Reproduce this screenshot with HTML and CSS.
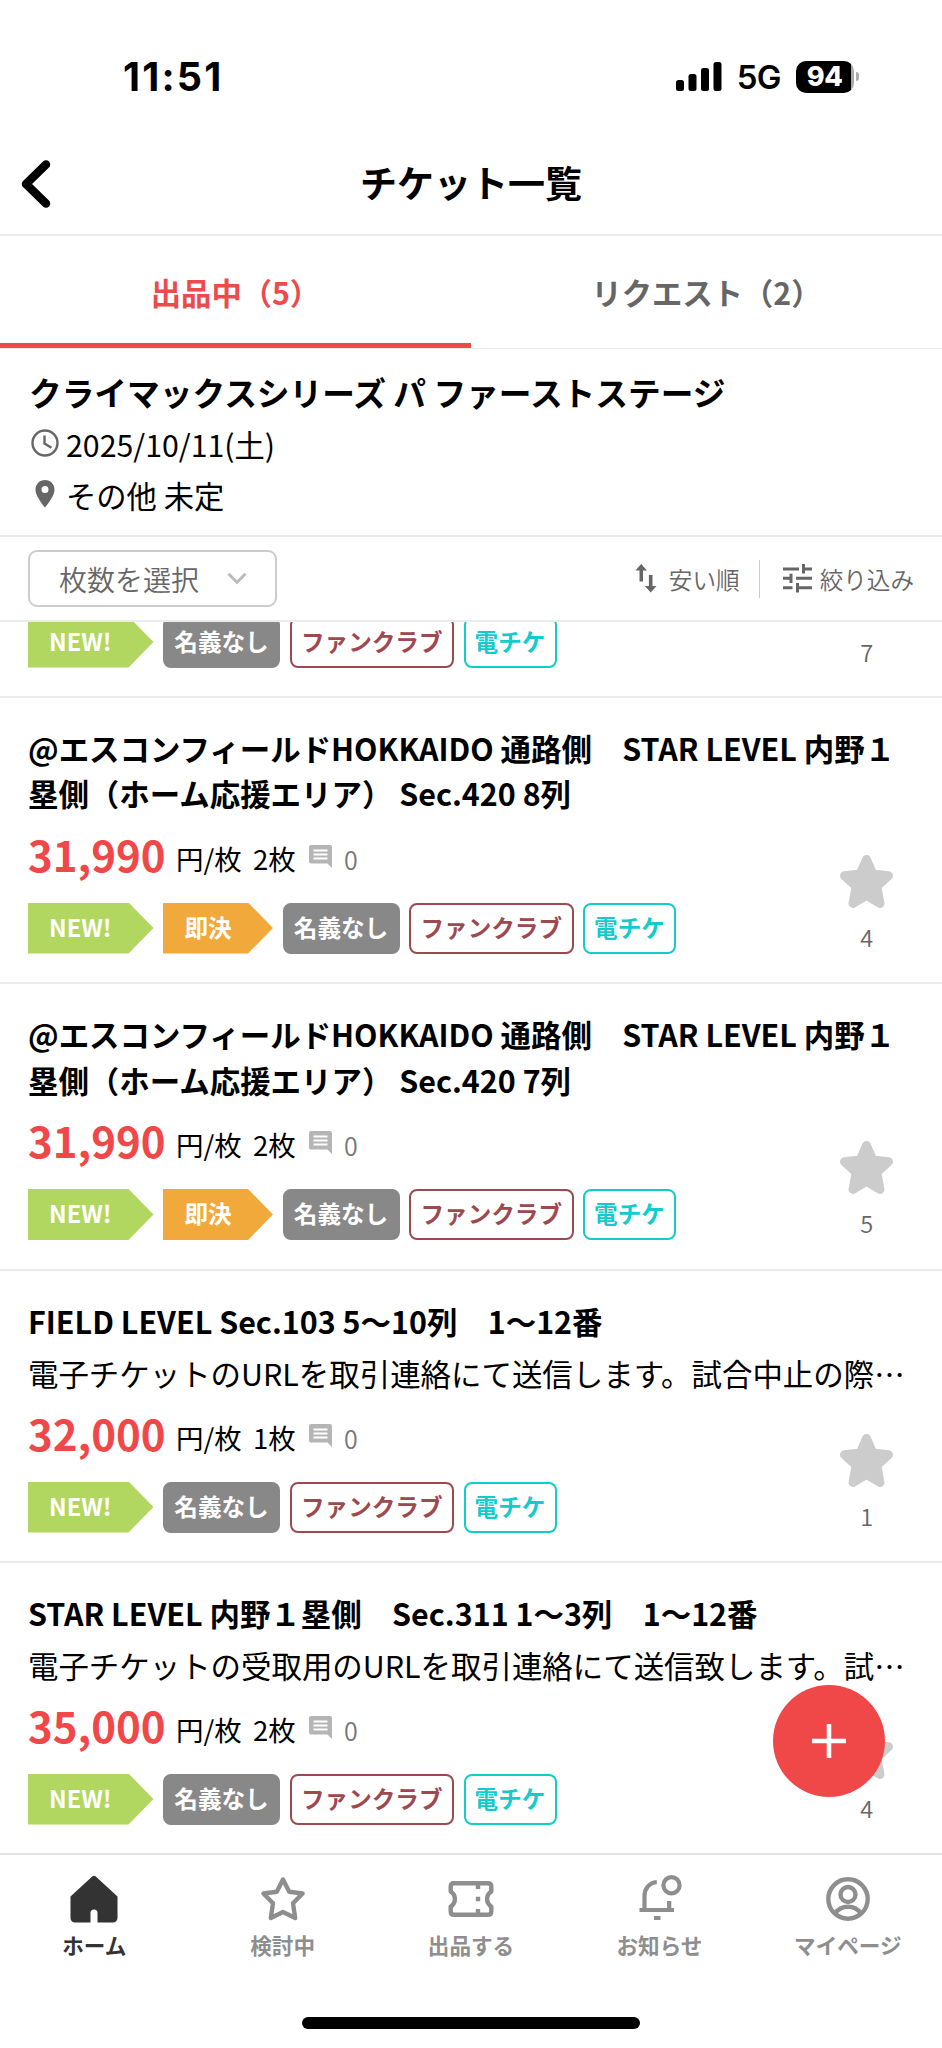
FILE: index.html
```html
<!DOCTYPE html>
<html lang="ja">
<head>
<meta charset="utf-8">
<title>チケット一覧</title>
<link rel="stylesheet" href="styles.css">
</head>
<body>
<svg class="defs" width="0" height="0">
  <symbol id="star" viewBox="0 0 53 53"><path d="M26.5 4.5 L32.8 19 L48.5 20.7 L36.8 31.3 L40 48.5 L26.5 40.5 L13 48.5 L16.2 31.3 L4.500 20.7 L20.200 19 Z" fill="#ccc" stroke="#ccc" stroke-width="9" stroke-linejoin="round"/></symbol>
  <symbol id="comment" viewBox="0 0 23 23"><path d="M2 0H21a2 2 0 0 1 2 2V23L18.500 18.500H2a2 2 0 0 1-2-2V2a2 2 0 0 1 2-2Z" fill="#b5b5b5"/><path d="M4.500 5.600H18.500M4.500 9.500H18.500M4.500 13.400H18.500" stroke="#fff" stroke-width="2"/></symbol>
</svg>
<div class="app">
  <div class="status">
    <span class="time">11:51</span>
    <span class="status-right">
      <svg width="46" height="29" viewBox="0 0 46 29"><rect x="0" y="18" width="8" height="11" rx="2.500"/><rect x="12.500" y="12" width="8" height="17" rx="2.500"/><rect x="25" y="6" width="8" height="23" rx="2.500"/><rect x="37.500" y="0" width="8" height="29" rx="2.500"/></svg>
      <span class="net">5G</span>
      <span class="battery"><span class="level">94</span><i class="tip"></i></span>
    </span>
  </div>
  <header class="header">
    <svg class="back" width="32" height="50" viewBox="0 0 32 50"><path d="M26 5.500L6 25L26 44.500" fill="none" stroke="#000" stroke-width="8.500" stroke-linecap="round" stroke-linejoin="round"/></svg>
    <h1>チケット一覧</h1>
  </header>
  <nav class="tabs">
    <div class="tab active">出品中（5）</div>
    <div class="tab">リクエスト（2）</div>
  </nav>
  <section class="event">
    <h2>クライマックスシリーズ パ ファーストステージ</h2>
    <div class="info"><svg width="28" height="28" viewBox="0 0 28 28"><g fill="none" stroke="#666" stroke-width="2.400"><circle cx="14" cy="14" r="12.500"/><path d="M13.500 6.500V14.500L20.500 18.700"/></g></svg><span>2025/10/11(土)</span></div>
    <div class="info place"><svg width="28" height="28" viewBox="0 0 28 28"><path fill-rule="evenodd" fill="#666" d="M14 0C8.500 0 4.500 4.200 4.500 9.700C4.500 16.500 14 27.500 14 27.500S23.500 16.500 23.500 9.700C23.500 4.200 19.500 0 14 0ZM14 13a3.500 3.500 0 1 1 0-7a3.500 3.500 0 0 1 0 7Z"/></svg><span>その他 未定</span></div>
  </section>
  <section class="filters">
    <div class="select"><span>枚数を選択</span><svg width="20" height="13" viewBox="0 0 20 13"><path d="M1.500 1.800L10 10.300L18.500 1.800" fill="none" stroke="#bbb" stroke-width="3"/></svg></div>
    <div class="actions">
      <div class="action sort"><svg width="22" height="29" viewBox="0 0 22 29"><path fill="#666" d="M6.200 0L12 6.500H8V17.500H4.500V6.500H.4ZM15.700 28.500L9.900 22H13.900V11H17.500V22H21.500Z"/></svg><span>安い順</span></div>
      <div class="action filter"><svg width="29" height="29" viewBox="0 0 29 29"><path fill="none" stroke="#666" stroke-width="3" d="M0 5H16M20.500 0V9.500M20.500 5H29M0 14.300H9M8 9.700V19M13 14.300H29M0 23.700H9.500M14.500 19V28.500M14.500 23.700H29"/></svg><span>絞り込み</span></div>
    </div>
  </section>
  <main class="list">
    <article class="card first">
      <div class="lower">
        <div class="detail">
          <div class="tags"><span class="flag new">NEW!</span><span class="tag gray">名義なし</span><span class="tag red">ファンクラブ</span><span class="tag cyan">電チケ</span></div>
        </div>
        <div class="fav"><span>7</span></div>
      </div>
    </article>
    <article class="card">
      <h3>@エスコンフィールドHOKKAIDO 通路側　STAR LEVEL 内野１<br>塁側（ホーム応援エリア） Sec.420 8列</h3>
      <div class="lower">
        <div class="detail">
          <div class="price"><b>31,990</b><span class="unit">円/枚</span><span class="qty">2枚</span><svg width="23" height="23"><use href="#comment"/></svg><span class="num">0</span></div>
          <div class="tags"><span class="flag new">NEW!</span><span class="flag now">即決</span><span class="tag gray">名義なし</span><span class="tag red">ファンクラブ</span><span class="tag cyan">電チケ</span></div>
        </div>
        <div class="fav"><svg width="53" height="53"><use href="#star"/></svg><span>4</span></div>
      </div>
    </article>
    <article class="card">
      <h3>@エスコンフィールドHOKKAIDO 通路側　STAR LEVEL 内野１<br>塁側（ホーム応援エリア） Sec.420 7列</h3>
      <div class="lower">
        <div class="detail">
          <div class="price"><b>31,990</b><span class="unit">円/枚</span><span class="qty">2枚</span><svg width="23" height="23"><use href="#comment"/></svg><span class="num">0</span></div>
          <div class="tags"><span class="flag new">NEW!</span><span class="flag now">即決</span><span class="tag gray">名義なし</span><span class="tag red">ファンクラブ</span><span class="tag cyan">電チケ</span></div>
        </div>
        <div class="fav"><svg width="53" height="53"><use href="#star"/></svg><span>5</span></div>
      </div>
    </article>
    <article class="card">
      <h3>FIELD LEVEL Sec.103 5〜10列　1〜12番</h3>
      <p>電子チケットのURLを取引連絡にて送信します。試合中止の際…</p>
      <div class="lower">
        <div class="detail">
          <div class="price"><b>32,000</b><span class="unit">円/枚</span><span class="qty">1枚</span><svg width="23" height="23"><use href="#comment"/></svg><span class="num">0</span></div>
          <div class="tags"><span class="flag new">NEW!</span><span class="tag gray">名義なし</span><span class="tag red">ファンクラブ</span><span class="tag cyan">電チケ</span></div>
        </div>
        <div class="fav"><svg width="53" height="53"><use href="#star"/></svg><span>1</span></div>
      </div>
    </article>
    <article class="card last">
      <h3>STAR LEVEL 内野１塁側　Sec.311 1〜3列　1〜12番</h3>
      <p>電子チケットの受取用のURLを取引連絡にて送信致します。試…</p>
      <div class="lower">
        <div class="detail">
          <div class="price"><b>35,000</b><span class="unit">円/枚</span><span class="qty">2枚</span><svg width="23" height="23"><use href="#comment"/></svg><span class="num">0</span></div>
          <div class="tags"><span class="flag new">NEW!</span><span class="tag gray">名義なし</span><span class="tag red">ファンクラブ</span><span class="tag cyan">電チケ</span></div>
        </div>
        <div class="fav"><svg width="53" height="53"><use href="#star"/></svg><span>4</span></div>
      </div>
    </article>
  </main>
  <div class="fab"><svg width="34" height="34" viewBox="0 0 34 34"><path d="M17 0V34M0 17H34" stroke="#fff" stroke-width="4.500"/></svg></div>
  <nav class="bottom">
    <div class="item on"><svg width="48" height="48" viewBox="0 0 48 48"><path fill="#333" d="M22.500 1.300Q24 0 25.500 1.300L47.500 21.500V43a4.500 4.500 0 0 1-4.500 4.500H27.500V38a3.500 3.500 0 0 0-7 0V47.500H5A4.500 4.500 0 0 1 .5 43V21.500Z"/></svg><span>ホーム</span></div>
    <div class="item"><svg width="48" height="48" viewBox="0 0 48 48"><path fill="none" stroke="#8e8e8e" stroke-width="4.400" stroke-linejoin="round" d="M24 4.500L30.200 16.700L43.600 18.500L34 28.200L36.200 43L24 37L11.800 43L14 28.200L4.400 18.500L17.800 16.700Z"/></svg><span>検討中</span></div>
    <div class="item"><svg width="48" height="48" viewBox="0 0 48 48"><g fill="none" stroke="#8e8e8e" stroke-width="4.400"><path stroke-linejoin="round" d="M7 8.200H41Q44.300 8.200 44.300 11.500V16.500A8.800 8.800 0 0 0 44.300 31.500V36.500Q44.300 39.800 41 39.800H7Q3.700 39.800 3.700 36.500V31.500A8.800 8.800 0 0 0 3.700 16.500V11.500Q3.700 8.200 7 8.200Z"/><path d="M31 10V14M31 21.800V26.200M31 34V38"/></g></svg><span>出品する</span></div>
    <div class="item"><svg width="48" height="48" viewBox="0 0 48 48"><g fill="none" stroke="#8e8e8e" stroke-width="4.200"><circle cx="36.500" cy="10.300" r="8.100"/><path d="M21.800 7.200C14 7.800 9.500 14 9.500 21V35M4.500 35H39M34.200 26V35M19 43H25.500"/></g></svg><span>お知らせ</span></div>
    <div class="item"><svg width="48" height="48" viewBox="0 0 48 48"><g fill="none" stroke="#8e8e8e" stroke-width="4.400"><circle cx="24" cy="24" r="19.700"/><circle cx="24" cy="19.500" r="7.500"/><path d="M11 38.500C14 34 18.500 31.700 24 31.700S34 34 37 38.500"/></g></svg><span>マイページ</span></div>
  </nav>
  <div class="home-area"><i></i></div>
</div>
</body>
</html>
```
FILE: styles.css
```css
* { box-sizing: border-box; }
body { margin: 0; background: #fff; color: #000; font-family: "Noto Sans CJK JP", sans-serif; }
h1, h2, h3, p { margin: 0; }
svg { display: block; flex: none; overflow: visible; }
.defs { position: absolute; }
.app { position: relative; display: flex; flex-direction: column; width: 942px; height: 2048px; overflow: hidden; white-space: nowrap; }

.status { display: flex; justify-content: space-between; align-items: center; height: 133px; padding: 20px 83px 0 123px; font-family: Inter, sans-serif; }
.time { font-size: 39.500px; font-weight: 700; letter-spacing: 2.200px; }
.status-right { display: flex; align-items: center; }
.net { margin-left: 15px; font-size: 33px; font-weight: 600; letter-spacing: -.6px; }
.battery { display: flex; align-items: center; margin-left: 15px; }
.level { width: 58px; height: 32px; border-radius: 10px; background: linear-gradient(90deg, #000 55px, #aaa 55px); color: #fff; font-size: 27px; font-weight: 800; line-height: 32px; text-align: center; letter-spacing: -.5px; padding-right: 1px; }
.tip { width: 3px; height: 9px; margin-left: 2px; border-radius: 0 4px 4px 0; background: #aaa; }

.header { display: flex; align-items: center; height: 103px; padding: 0 20px; border-bottom: 2px solid #ebebeb; }
.header h1 { flex: 1; margin-right: 32px; text-align: center; font-size: 37px; font-weight: 700; line-height: 50px; padding-bottom: 3px; }

.tabs { display: flex; height: 113px; border-bottom: 1px solid #ebebeb; }
.tab { flex: 1; height: 112px; padding-top: 31px; text-align: center; font-size: 30.300px; font-weight: 700; line-height: 50px; color: #666; }
.active { color: #eb4b4b; border-bottom: 5px solid #eb4b4b; }

.event { height: 188px; padding: 18px 29px 0; border-bottom: 2px solid #ebebeb; }
.event h2 { font-size: 32.700px; font-weight: 700; line-height: 50px; }
.info { display: flex; align-items: center; gap: 8px; height: 50px; margin-top: 2px; padding-left: 2px; font-size: 30.300px; line-height: 50px; }
.info svg { margin-top: -3px; }
.info span { margin-left: -1px; }
.place { margin-top: 1px; }

.filters { display: flex; align-items: center; justify-content: space-between; height: 85px; padding: 0 28px; border-bottom: 2px solid #ebebeb; color: #666; }
.select { display: flex; align-items: center; width: 249px; height: 57px; padding: 0 28px 0 29px; justify-content: space-between; border: 2px solid #ccc; border-radius: 9px; font-size: 28px; font-weight: 350; line-height: 50px; }
.actions { display: flex; align-items: center; }
.action { display: flex; align-items: center; height: 38px; font-size: 23.600px; font-weight: 350; line-height: 38px; }
.sort { gap: 12px; padding-right: 19px; border-right: 1px solid #ccc; }
.filter { gap: 8px; padding-left: 23px; }

.list { flex: 1; overflow: hidden; }
.card { height: 286.500px; padding: 28px 28px 0; border-bottom: 2px solid #ebebeb; }
.card:nth-child(n+4) { height: 292px; }
.card.first { display: flow-root; height: 75.500px; padding-top: 0; }
.first .lower { margin-top: -5.500px; }
.first .tags { margin-top: 0; }
.first .fav { padding-top: 6.500px; }
.card.last { border-bottom: 0; }
.card h3 { font-size: 30.450px; font-weight: 700; line-height: 45.500px; }
.card p { margin-top: 5.500px; font-size: 30.450px; line-height: 46px; }
.lower { display: flex; justify-content: space-between; margin-top: 12px; }
.price { display: flex; height: 50px; line-height: 50px; font-size: 27.500px; }
.price b { width: 148px; font-size: 42px; font-weight: 700; color: #f04848; }
.unit { width: 77px; padding-top: 4px; }
.qty { width: 56px; padding-top: 4px; }
.price svg { margin-top: 16px; }
.num { margin-left: 12px; padding-top: 5px; font-size: 25px; font-weight: 350; color: #777; }
.tags { display: flex; gap: 9.500px; margin-top: 24px; }
.tag, .flag { height: 51px; font-size: 23.600px; font-weight: 700; line-height: 48px; text-align: center; }
.flag { color: #fff; clip-path: polygon(0 0, calc(100% - 25px) 0, 100% 50%, calc(100% - 25px) 100%, 0 100%); }
.new { width: 125.500px; padding-right: 21px; background: #b2d760; }
.now { width: 110px; padding-right: 20px; background: #f2a93c; }
.tag { border: 2px solid; border-radius: 8px; line-height: 44px; }
.gray { width: 117px; background: #888; border-color: #888; color: #fff; }
.red { width: 164.500px; color: #9d494f; }
.cyan { width: 93px; color: #12cbcb; }
.fav { display: flex; flex-direction: column; align-items: center; width: 94.500px; padding-top: 26px; font-size: 23.500px; font-weight: 350; line-height: 30px; color: #666; }
.fav span { margin-top: 14px; }

.fab { position: absolute; left: 773px; top: 1685px; display: flex; align-items: center; justify-content: center; width: 112px; height: 112px; border-radius: 50%; background: #f04848; }

.bottom { display: flex; height: 120px; padding-top: 20px; border-top: 2px solid #e2e2e2; }
.item { flex: 1; display: flex; flex-direction: column; align-items: center; font-size: 21.600px; font-weight: 700; line-height: 30px; color: #8e8e8e; }
.item span { margin-top: 7px; }
.on { color: #333; }
.home-area { display: flex; justify-content: center; height: 75px; padding-top: 44px; }
.home-area i { width: 338px; height: 12px; border-radius: 6px; background: #000; }
```
